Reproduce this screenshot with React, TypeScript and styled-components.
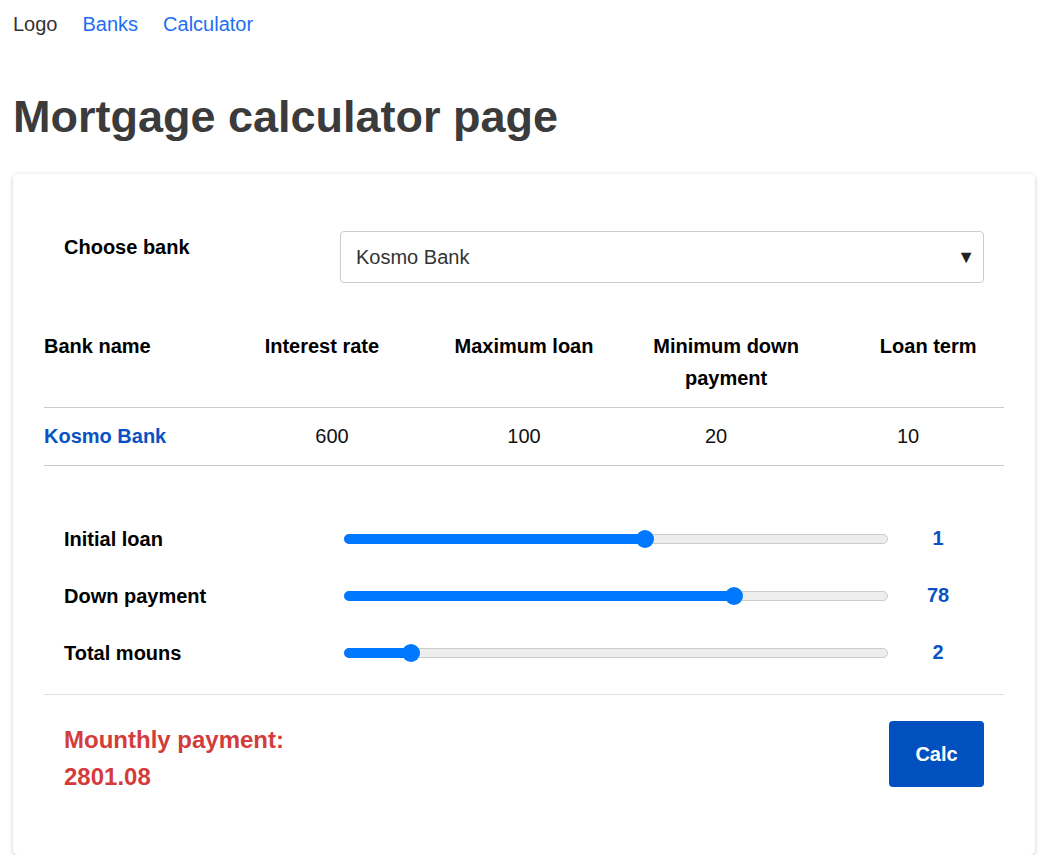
import React from "react";
import styled, { createGlobalStyle } from "styled-components";

const GlobalStyle = createGlobalStyle`
  html, body { margin: 0; padding: 0; background: #fff; }
  body { font-family: "Liberation Sans", Arial, sans-serif; color: #333; }
  * { box-sizing: border-box; }
`;

const Page = styled.div`
  padding: 0 16px 0 13px;
`;

const Nav = styled.nav`
  display: flex;
  gap: 25px;
  height: 48px;
  align-items: center;
  font-size: 20px;
`;

const NavItem = styled.a<{ $logo?: boolean }>`
  color: ${(p) => (p.$logo ? "#333" : "#1d6ef2")};
  text-decoration: none;
`;

const Title = styled.h1`
  margin: 43px 0 31px;
  font-size: 45px;
  line-height: 52px;
  font-weight: 700;
  color: #3b3b3b;
`;

const Card = styled.section`
  background: #fff;
  border-radius: 5px;
  box-shadow: 0 1px 4px rgba(0, 0, 0, 0.22);
  padding: 57px 31px 60px;
`;

const ChooseRow = styled.div`
  display: grid;
  grid-template-columns: 30% 70%;
  align-items: start;
  padding: 0 20px;
`;

const Label = styled.div`
  font-size: 20px;
  font-weight: 700;
  line-height: 32px;
  color: #000;
`;

const SelectBox = styled.div`
  height: 52px;
  border: 1px solid #ccc;
  border-radius: 4px;
  display: flex;
  align-items: center;
  padding: 0 15px;
  font-size: 20px;
  color: #333;
`;

const Arrow = styled.span`
  margin-left: auto;
  font-size: 18px;
  color: #222;
  margin-right: -7px;
`;

const Table = styled.div`
  margin-top: 34px;
`;

const HeadRow = styled.div`
  display: grid;
  grid-template-columns: 3fr 5fr 3fr 5fr 3fr;
  padding: 13px 0;
  border-bottom: 1px solid #ccc;
`;

const HeadCell = styled.div<{ $left?: boolean; $wrap?: boolean }>`
  font-size: 20px;
  font-weight: 700;
  line-height: 32px;
  color: #000;
  text-align: ${(p) => (p.$left ? "left" : "center")};
  padding: 0 ${(p) => (p.$wrap ? "40px" : "0")};
  white-space: ${(p) => (p.$wrap ? "normal" : "nowrap")};
`;

const BodyRow = styled.div`
  display: grid;
  grid-template-columns: repeat(5, 1fr);
  padding: 12px 0 13px;
  border-bottom: 1px solid #ccc;
`;

const Cell = styled.div<{ $link?: boolean }>`
  font-size: 20px;
  line-height: 32px;
  text-align: ${(p) => (p.$link ? "left" : "center")};
  font-weight: ${(p) => (p.$link ? 700 : 400)};
  color: ${(p) => (p.$link ? "#0a52c4" : "#111")};
`;

const Sliders = styled.div`
  padding: 44px 20px 13px;
  border-bottom: 1px solid #ddd;
`;

const SliderRow = styled.div`
  display: grid;
  grid-template-columns: 30% 60% 10%;
  align-items: center;
  height: 57px;
`;

const Track = styled.div`
  position: relative;
  margin: 0 4px;
  height: 10px;
  border-radius: 5px;
  background: #eee;
  border: 1px solid #ccc;
`;

const Fill = styled.div`
  position: absolute;
  left: -1px;
  top: -1px;
  bottom: -1px;
  border-radius: 5px 0 0 5px;
  background: #0077ff;
`;

const Thumb = styled.div`
  position: absolute;
  top: 50%;
  width: 18px;
  height: 18px;
  margin: -9px 0 0 -9px;
  border-radius: 50%;
  background: #0077ff;
`;

const Value = styled.div`
  text-align: center;
  font-size: 20px;
  font-weight: 700;
  color: #0a52c4;
`;

const PayRow = styled.div`
  display: flex;
  justify-content: space-between;
  align-items: flex-start;
  padding: 26px 20px 0;
`;

const Payment = styled.div`
  font-size: 24px;
  font-weight: 700;
  line-height: 37px;
  color: #d43c3c;
`;

const CalcButton = styled.button`
  width: 95px;
  height: 66px;
  border: none;
  border-radius: 4px;
  background: #0050c0;
  color: #fff;
  font-family: "Liberation Sans", Arial, sans-serif;
  font-size: 20px;
  font-weight: 700;
  cursor: pointer;
`;

const Slider = ({ pct }: { pct: number }) => (
  <Track>
    <Fill style={{ width: `${pct}%` }} />
    <Thumb style={{ left: `${pct}%` }} />
  </Track>
);

const sliders = [
  { label: "Initial loan", pct: 55.3, value: "1" },
  { label: "Down payment", pct: 71.8, value: "78" },
  { label: "Total mouns", pct: 12.2, value: "2" },
];

export default function App() {
  return (
    <>
      <GlobalStyle />
      <Page>
        <Nav>
          <NavItem $logo>Logo</NavItem>
          <NavItem href="#">Banks</NavItem>
          <NavItem href="#">Calculator</NavItem>
        </Nav>
        <Title>Mortgage calculator page</Title>
        <Card>
          <ChooseRow>
            <Label>Choose bank</Label>
            <SelectBox>
              Kosmo Bank
              <Arrow>▼</Arrow>
            </SelectBox>
          </ChooseRow>
          <Table>
            <HeadRow>
              <HeadCell $left>Bank name</HeadCell>
              <HeadCell>Interest rate</HeadCell>
              <HeadCell>Maximum loan</HeadCell>
              <HeadCell $wrap>Minimum down payment</HeadCell>
              <HeadCell>Loan term</HeadCell>
            </HeadRow>
            <BodyRow>
              <Cell $link>Kosmo Bank</Cell>
              <Cell>600</Cell>
              <Cell>100</Cell>
              <Cell>20</Cell>
              <Cell>10</Cell>
            </BodyRow>
          </Table>
          <Sliders>
            {sliders.map((s) => (
              <SliderRow key={s.label}>
                <Label>{s.label}</Label>
                <Slider pct={s.pct} />
                <Value>{s.value}</Value>
              </SliderRow>
            ))}
          </Sliders>
          <PayRow>
            <Payment>
              Mounthly payment:
              <br />
              2801.08
            </Payment>
            <CalcButton>Calc</CalcButton>
          </PayRow>
        </Card>
      </Page>
    </>
  );
}
